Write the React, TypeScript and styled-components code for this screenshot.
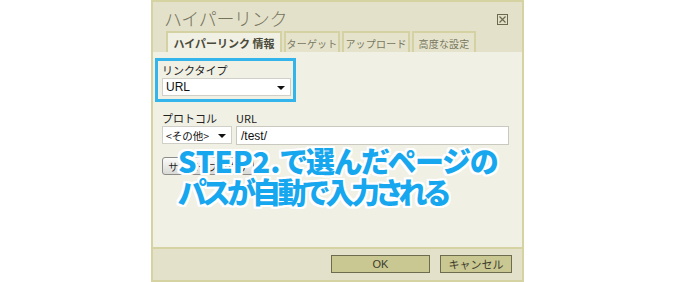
import React from "react";
import styled, { createGlobalStyle } from "styled-components";

const GlobalStyle = createGlobalStyle`
  html, body {
    margin: 0;
    padding: 0;
    background: #ffffff;
  }
  body {
    font-family: "Liberation Sans", "Noto Sans CJK JP", sans-serif;
  }
`;

const Dialog = styled.div`
  position: relative;
  box-sizing: border-box;
  width: 373px;
  height: 282px;
  margin-left: 151px;
  border: 2px solid #d6d3a3;
  background: #e3e1ca;
  display: flex;
  flex-direction: column;
`;

const Header = styled.div`
  height: 29px;
  display: flex;
  align-items: center;
  justify-content: space-between;
  padding: 0 14px 0 11px;
`;

const Title = styled.div`
  font-family: "Noto Sans CJK JP", sans-serif;
  font-size: 18px;
  font-weight: 300;
  color: #74735c;
  letter-spacing: -0.3px;
  padding-top: 2px;
`;

const CloseBox = styled.div`
  width: 11px;
  height: 11px;
  margin-top: 6px;
  display: flex;
`;

const Tabs = styled.div`
  height: 21px;
  display: flex;
  align-items: stretch;
  padding-left: 13px;
  gap: 2px;
`;

const Tab = styled.div<{ $active?: boolean; $width: number }>`
  box-sizing: border-box;
  width: ${(p) => p.$width}px;
  display: flex;
  align-items: center;
  justify-content: center;
  padding-top: 1px;
  border: 2px solid #d4d1a2;
  border-bottom: none;
  background: ${(p) => (p.$active ? "#f1f0e4" : "#e5e3cc")};
  font-family: "Noto Sans CJK JP", sans-serif;
  font-size: ${(p) => (p.$active ? "11px" : "10px")};
  font-weight: ${(p) => (p.$active ? 700 : 400)};
  color: ${(p) => (p.$active ? "#4a4a3a" : "#77775f")};
  letter-spacing: ${(p) => (p.$active ? "0" : "0.2px")};
  white-space: nowrap;
`;

const Body = styled.div`
  position: relative;
  flex: 1;
  background: #f1f0e4;
  padding: 6px 9px 0 9px;
  display: flex;
  flex-direction: column;
  align-items: flex-start;
`;

const Highlight = styled.div`
  box-sizing: border-box;
  width: 141px;
  margin-left: -7px;
  border: 3px solid #33b4ea;
  padding: 3px 1px 3px 4px;
  display: flex;
  flex-direction: column;
`;

const Label = styled.div`
  font-family: "Noto Sans CJK JP", sans-serif;
  font-size: 11px;
  line-height: 13px;
  color: #222;
  height: 13px;
  margin-bottom: 1px;
  white-space: nowrap;
`;

const SelectBox = styled.div<{ $width: number }>`
  box-sizing: border-box;
  width: ${(p) => p.$width}px;
  height: 18px;
  background: #fff;
  border: 1px solid #d0d0c8;
  display: flex;
  align-items: center;
  justify-content: space-between;
  padding: 0 5px 0 3px;
  font-family: "Liberation Sans", "Noto Sans CJK JP", sans-serif;
  font-size: 12px;
  color: #111;
  white-space: nowrap;
`;

const SmallValue = styled.span`
  font-family: "Noto Sans CJK JP", sans-serif;
  font-size: 10.5px;
`;

const Arrow = styled.span`
  width: 0;
  height: 0;
  border-left: 4px solid transparent;
  border-right: 4px solid transparent;
  border-top: 4px solid #111;
  margin-top: 2px;
`;

const FieldRow = styled.div`
  display: flex;
  gap: 4px;
  margin-top: 10px;
`;

const Field = styled.div`
  display: flex;
  flex-direction: column;
`;

const TextInput = styled.div`
  box-sizing: border-box;
  width: 273px;
  height: 19px;
  background: #fff;
  border: 1px solid #c9c9c0;
  display: flex;
  align-items: center;
  padding-left: 4px;
  font-family: "Liberation Sans", sans-serif;
  font-size: 12px;
  color: #111;
`;

const BrowseButton = styled.div`
  box-sizing: border-box;
  width: 92px;
  height: 18px;
  margin-top: 12px;
  border: 1px solid #8c8c88;
  border-radius: 3px;
  background: linear-gradient(#fbfbfb, #d9d9d6);
  display: flex;
  align-items: center;
  justify-content: center;
  font-family: "Noto Sans CJK JP", sans-serif;
  font-size: 10px;
  color: #222;
`;

const Caption = styled.div`
  position: absolute;
  left: 25px;
  top: 93px;
  font-family: "Noto Sans CJK JP", sans-serif;
  font-weight: 900;
  font-size: 29px;
  line-height: 31px;
  color: #17a7ef;
  font-feature-settings: "palt";
  white-space: nowrap;
  text-shadow:
    2px 0 0 #fff, -2px 0 0 #fff, 0 2px 0 #fff, 0 -2px 0 #fff,
    2px 2px 0 #fff, -2px -2px 0 #fff, 2px -2px 0 #fff, -2px 2px 0 #fff,
    1px 2px 0 #fff, 2px 1px 0 #fff, -1px 2px 0 #fff, -2px 1px 0 #fff;
`;

const CaptionPart = styled.span<{ $spacing: number }>`
  letter-spacing: ${(p) => p.$spacing}px;
`;

const Footer = styled.div`
  box-sizing: border-box;
  height: 33px;
  border-top: 2px solid #d6d3a3;
  display: flex;
  align-items: center;
  justify-content: flex-end;
  gap: 10px;
  padding: 0 10px 1px 0;
`;

const FooterButton = styled.div<{ $width: number }>`
  box-sizing: border-box;
  width: ${(p) => p.$width}px;
  height: 18px;
  background: #c9c792;
  border: 1px solid #6d6c4e;
  display: flex;
  align-items: center;
  justify-content: center;
  font-family: "Liberation Sans", "Noto Sans CJK JP", sans-serif;
  font-size: 11px;
  color: #3d3d2c;
`;

const CloseIcon = () => (
  <svg width="11" height="11" viewBox="0 0 11 11">
    <rect x="0.5" y="0.5" width="10" height="10" fill="none" stroke="#6b6a4e" />
    <path d="M2.5 2.5 L8.5 8.5 M8.5 2.5 L2.5 8.5" stroke="#6b6a4e" strokeWidth="1.2" />
  </svg>
);

const App: React.FC = () => {
  return (
    <>
      <GlobalStyle />
      <Dialog>
        <Header>
          <Title>ハイパーリンク</Title>
          <CloseBox>
            <CloseIcon />
          </CloseBox>
        </Header>

        <Tabs>
          <Tab $active $width={116}>
            ハイパーリンク 情報
          </Tab>
          <Tab $width={56}>ターゲット</Tab>
          <Tab $width={68}>アップロード</Tab>
          <Tab $width={64}>高度な設定</Tab>
        </Tabs>

        <Body>
          <Highlight>
            <Label>リンクタイプ</Label>
            <SelectBox $width={129}>
              URL
              <Arrow />
            </SelectBox>
          </Highlight>

          <FieldRow>
            <Field>
              <Label>プロトコル</Label>
              <SelectBox $width={70}>
                <SmallValue>&lt;その他&gt;</SmallValue>
                <Arrow />
              </SelectBox>
            </Field>
            <Field>
              <Label>URL</Label>
              <TextInput>/test/</TextInput>
            </Field>
          </FieldRow>

          <BrowseButton>サーバーブラウザ</BrowseButton>

          <Caption>
            <CaptionPart $spacing={0}>STEP2.</CaptionPart>
            <CaptionPart $spacing={-0.8}>で選んだページの</CaptionPart>
            <br />
            <CaptionPart $spacing={-3.6}>パスが自動で入力される</CaptionPart>
          </Caption>
        </Body>

        <Footer>
          <FooterButton $width={99}>OK</FooterButton>
          <FooterButton $width={72}>キャンセル</FooterButton>
        </Footer>
      </Dialog>
    </>
  );
};

export default App;
